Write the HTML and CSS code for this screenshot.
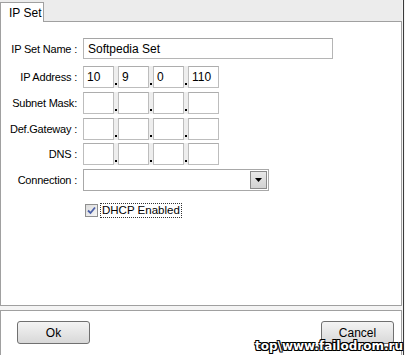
FILE: index.html
```html
<!DOCTYPE html>
<html lang="en">
<head>
    <meta charset="UTF-8">
    <title>IP Set</title>
    <link rel="stylesheet" href="styles.css">
</head>
<body>
<div class="window">
    <div class="tabBar">
        <div class="tab">IP Set</div>
    </div>
    <div class="panel">
        <div class="row nameRow">
            <label class="caption">IP Set Name :</label>
            <div class="textBox nameBox">Softpedia Set</div>
        </div>
        <div class="row ipRow">
            <label class="caption">IP Address :</label>
            <div class="ipBox">
                <div class="octet">10</div><div class="dot"></div>
                <div class="octet">9</div><div class="dot"></div>
                <div class="octet">0</div><div class="dot"></div>
                <div class="octet">110</div>
            </div>
        </div>
        <div class="row ipRow">
            <label class="caption">Subnet Mask:</label>
            <div class="ipBox">
                <div class="octet"></div><div class="dot"></div>
                <div class="octet"></div><div class="dot"></div>
                <div class="octet"></div><div class="dot"></div>
                <div class="octet"></div>
            </div>
        </div>
        <div class="row ipRow gatewayRow">
            <label class="caption">Def.Gateway :</label>
            <div class="ipBox">
                <div class="octet"></div><div class="dot"></div>
                <div class="octet"></div><div class="dot"></div>
                <div class="octet"></div><div class="dot"></div>
                <div class="octet"></div>
            </div>
        </div>
        <div class="row ipRow">
            <label class="caption">DNS :</label>
            <div class="ipBox">
                <div class="octet"></div><div class="dot"></div>
                <div class="octet"></div><div class="dot"></div>
                <div class="octet"></div><div class="dot"></div>
                <div class="octet"></div>
            </div>
        </div>
        <div class="row comboRow">
            <label class="caption">Connection :</label>
            <div class="combo">
                <div class="comboButton">
                    <svg width="7" height="4" viewBox="0 0 7 4"><path d="M0 0h7L3.5 4z" fill="#000"/></svg>
                </div>
            </div>
        </div>
        <div class="checkRow">
            <span class="checkBox">
                <svg width="9" height="9" viewBox="0 0 9 9"><path d="M1 4.5l2.5 2.5L8 1.5" fill="none" stroke="#4a5fa8" stroke-width="1.8"/></svg>
            </span>
            <span class="checkText">DHCP Enabled</span>
        </div>
    </div>
    <div class="footer">
        <button class="btn" type="button">Ok</button>
        <button class="btn" type="button">Cancel</button>
    </div>
    <div class="watermark">top\www.failodrom.ru</div>
</div>
</body>
</html>
```

FILE: styles.css
```css
body {
    margin: 0;
    padding: 0;
    background-color: #f4f4f4;
    font-family: "Liberation Sans", Arial, sans-serif;
    font-size: 11px;
    color: #000;
}
.window {
    position: relative;
    width: 402px;
    height: 355px;
    padding-right: 1px;
    border-right: 1px solid #3a3a3a;
    background-color: #f4f4f4;
    display: flex;
    flex-direction: column;
}
.tabBar {
    height: 21px;
    display: flex;
    align-items: flex-end;
    background-color: #ececec;
}
.tab {
    width: 44px;
    height: 20px;
    border: 1px solid #a0a0a0;
    border-bottom: none;
    background-color: #fff;
    font-size: 12px;
    line-height: 20px;
    padding-left: 8px;
    box-sizing: border-box;
    position: relative;
    top: 1px;
}
.panel {
    height: 285px;
    box-sizing: border-box;
    border: 1px solid #a0a0a0;
    background-color: #fff;
    padding-top: 16px;
}
.row {
    display: flex;
    align-items: center;
}
.caption {
    width: 76px;
    margin-right: 6px;
    text-align: right;
    white-space: nowrap;
    letter-spacing: -0.2px;
}
.nameRow {
    height: 21px;
    margin-bottom: 7px;
}
.textBox {
    height: 21px;
    box-sizing: border-box;
    border: 1px solid #b5b5b5;
    border-top-color: #a5a5a5;
    padding: 3px 4px;
    font-size: 12px;
}
.nameBox {
    width: 250px;
}
.ipRow {
    height: 22px;
    margin-bottom: 4px;
}
.gatewayRow {
    margin-bottom: 3px;
}
.ipBox {
    display: flex;
    height: 22px;
}
.octet {
    width: 31px;
    height: 22px;
    box-sizing: border-box;
    border: 1px solid #bdbdbd;
    border-top-color: #adadad;
    padding: 3px 3px;
    font-size: 12px;
}
.dot {
    width: 4px;
    height: 22px;
    background-color: #eeeeee;
    position: relative;
}
.dot::after {
    content: "";
    position: absolute;
    left: 1px;
    bottom: 3px;
    width: 2px;
    height: 2px;
    background-color: #000;
}
.comboRow {
    height: 22px;
}
.combo {
    width: 186px;
    height: 22px;
    box-sizing: border-box;
    border: 1px solid #a8a8a8;
    display: flex;
    justify-content: flex-end;
    padding: 1px;
}
.comboButton {
    width: 17px;
    height: 18px;
    box-sizing: border-box;
    border: 1px solid #8a8a8a;
    background: linear-gradient(#e8e8e8, #d2d2d2);
    display: flex;
    align-items: center;
    justify-content: center;
}
.checkRow {
    display: flex;
    align-items: center;
    margin-top: 11px;
    margin-left: 84px;
    height: 16px;
}
.checkBox {
    width: 13px;
    height: 13px;
    box-sizing: border-box;
    border: 1px solid #8f8f8f;
    background: linear-gradient(135deg, #dcdcdc, #f6f6f6);
    display: flex;
    align-items: center;
    justify-content: center;
    margin-right: 2px;
}
.checkText {
    font-size: 11.5px;
    border: 1px dotted #333;
    padding: 0 1px;
    line-height: 13px;
}
.footer {
    flex: 1;
    margin-top: 4px;
    border: 1px solid #a0a0a0;
    border-bottom: none;
    background-color: #fff;
    display: flex;
    justify-content: space-between;
    align-items: flex-start;
    padding: 10px 7px 0 16px;
}
.btn {
    width: 73px;
    height: 23px;
    border: 1px solid #707070;
    border-radius: 3px;
    background: linear-gradient(#f4f4f4, #e6e6e6 50%, #d8d8d8);
    font-family: "Liberation Sans", Arial, sans-serif;
    font-size: 12px;
    color: #000;
    padding: 0;
}
.watermark {
    position: absolute;
    right: 0;
    bottom: 2px;
    font-family: "DejaVu Sans", sans-serif;
    font-weight: bold;
    font-size: 12px;
    color: #fff;
    text-shadow: -1px -1px 0 #000, 1px -1px 0 #000, -1px 1px 0 #000, 1px 1px 0 #000, 0 1px 0 #000, 0 -1px 0 #000;
}
```
